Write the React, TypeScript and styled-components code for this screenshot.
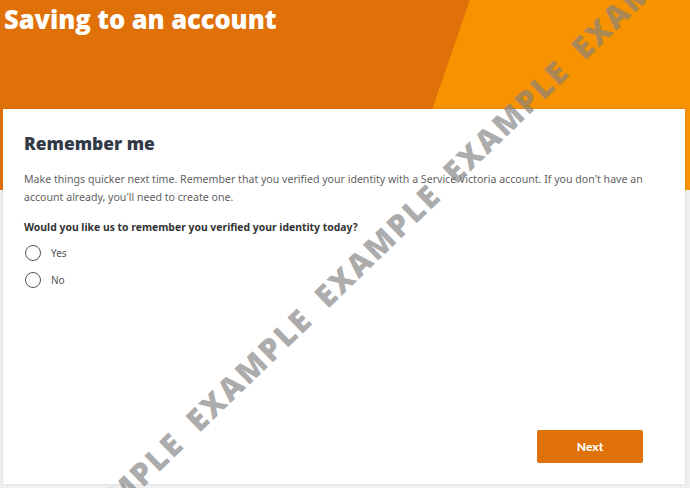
import styled, { createGlobalStyle } from "styled-components";
import { useState } from "react";

const GlobalStyle = createGlobalStyle`
  body {
    margin: 0;
    background: #efefef;
    font-family: "Open Sans", "Liberation Sans", sans-serif;
  }
`;

const Page = styled.div`
  position: relative;
  width: 690px;
  height: 488px;
  overflow: hidden;
`;

const Hero = styled.header`
  position: relative;
  height: 190px;
  background: #e07109;

  &::after {
    content: "";
    position: absolute;
    inset: 0;
    background: #f79200;
    clip-path: polygon(68.1% 0, 100% 0, 100% 100%, 58.6% 100%);
  }
`;

const Title = styled.h1`
  position: relative;
  z-index: 1;
  margin: 0;
  padding: 2px 0 0 4px;
  font-size: 25.6px;
  font-weight: 800;
  color: #fff;
  letter-spacing: -0.1px;
`;

const Card = styled.main`
  position: relative;
  z-index: 1;
  margin: -81px 5px 0 3px;
  height: 375px;
  box-sizing: border-box;
  padding: 22px 21px 21px;
  background: #fff;
  box-shadow: 0 0 2px rgba(0, 0, 0, 0.12);
  display: flex;
  flex-direction: column;
`;

const Heading = styled.h2`
  margin: 0;
  font-size: 17.4px;
  font-weight: 800;
  color: #333a47;
`;

const Intro = styled.p`
  margin: 15px 0 0;
  font-family: "Noto Sans", sans-serif;
  font-size: 10.6px;
  line-height: 18px;
  color: #5f5f5f;
  max-width: 632px;
`;

const Question = styled.p`
  margin: 14px 0 11px;
  font-family: "Noto Sans", sans-serif;
  font-size: 10.4px;
  font-weight: 700;
  color: #333;
`;

const Options = styled.div`
  display: flex;
  flex-direction: column;
  gap: 11px;
`;

const Option = styled.label`
  display: flex;
  align-items: center;
  gap: 10px;
  font-family: "Noto Sans", sans-serif;
  font-size: 10px;
  color: #555;
  cursor: pointer;
`;

const Circle = styled.span<{ $checked: boolean }>`
  width: 14px;
  height: 14px;
  border: 1.2px solid #555;
  border-radius: 50%;
  margin-left: 1px;
  display: grid;
  place-items: center;

  &::after {
    content: "";
    width: 8px;
    height: 8px;
    border-radius: 50%;
    background: ${(p) => (p.$checked ? "#e07109" : "transparent")};
  }
`;

const Footer = styled.div`
  margin-top: auto;
  display: flex;
  justify-content: flex-end;
  padding-right: 21px;
`;

const NextButton = styled.button`
  width: 106px;
  height: 33px;
  border: none;
  border-radius: 2px;
  background: #e07109;
  color: #fff;
  font-family: "Lato", sans-serif;
  font-size: 12px;
  font-weight: 900;
  cursor: pointer;
`;

const Watermark = styled.div`
  position: absolute;
  z-index: 2;
  left: 377px;
  top: 245px;
  transform: translate(-50%, -50%) rotate(-44deg);
  white-space: nowrap;
  font-family: "Open Sans", sans-serif;
  font-size: 31px;
  font-weight: 800;
  letter-spacing: 2px;
  word-spacing: 8px;
  color: rgba(130, 130, 130, 0.66);
  pointer-events: none;
`;

export default () => {
  const [choice, setChoice] = useState<string | null>(null);

  return (
    <Page>
      <GlobalStyle />
      <Hero>
        <Title>Saving to an account</Title>
      </Hero>
      <Card>
        <Heading>Remember me</Heading>
        <Intro>
          Make things quicker next time. Remember that you verified your identity
          with a Service Victoria account. If you don't have an account already,
          you'll need to create one.
        </Intro>
        <Question>
          Would you like us to remember you verified your identity today?
        </Question>
        <Options>
          {["Yes", "No"].map((o) => (
            <Option key={o} onClick={() => setChoice(o)}>
              <Circle $checked={choice === o} />
              {o}
            </Option>
          ))}
        </Options>
        <Footer>
          <NextButton>Next</NextButton>
        </Footer>
      </Card>
      <Watermark>EXAMPLE EXAMPLE EXAMPLE EXAMPLE EXAMPLE</Watermark>
    </Page>
  );
};
